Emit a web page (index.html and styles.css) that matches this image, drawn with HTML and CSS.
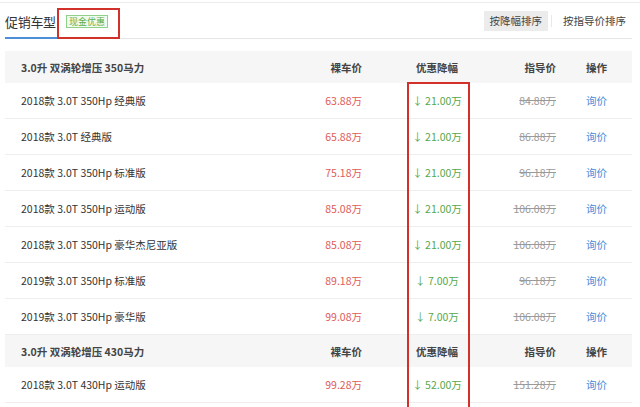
FILE: index.html
```html
<!DOCTYPE html>
<html lang="zh">
<head>
<meta charset="utf-8">
<link rel="stylesheet" href="styles.css">
</head>
<body>
<div class="page">
  <div class="topline"></div>
  <div class="tabs">
    <div class="tab-left">
      <div class="tab-title">促销车型</div>
      <span class="tag">现金优惠</span>
    </div>
    <div class="sorts">
      <span class="sort active">按降幅排序</span>
      <span class="sep"></span>
      <span class="sort">按指导价排序</span>
    </div>
    <div class="mark mark-tag"></div>
  </div>
  <div class="table">
    <div class="row head"><div class="c-name">3.0升 双涡轮增压 350马力</div><div class="c-price">裸车价</div><div class="c-disc">优惠降幅</div><div class="c-guide">指导价</div><div class="c-op">操作</div></div>
    <div class="row"><div class="c-name">2018款 3.0T 350Hp 经典版</div><div class="c-price red">63.88万</div><div class="c-disc green">↓ 21.00万</div><div class="c-guide strike">84.88万</div><div class="c-op blue">询价</div></div>
    <div class="row"><div class="c-name">2018款 3.0T 经典版</div><div class="c-price red">65.88万</div><div class="c-disc green">↓ 21.00万</div><div class="c-guide strike">86.88万</div><div class="c-op blue">询价</div></div>
    <div class="row"><div class="c-name">2018款 3.0T 350Hp 标准版</div><div class="c-price red">75.18万</div><div class="c-disc green">↓ 21.00万</div><div class="c-guide strike">96.18万</div><div class="c-op blue">询价</div></div>
    <div class="row"><div class="c-name">2018款 3.0T 350Hp 运动版</div><div class="c-price red">85.08万</div><div class="c-disc green">↓ 21.00万</div><div class="c-guide strike">106.08万</div><div class="c-op blue">询价</div></div>
    <div class="row"><div class="c-name">2018款 3.0T 350Hp 豪华杰尼亚版</div><div class="c-price red">85.08万</div><div class="c-disc green">↓ 21.00万</div><div class="c-guide strike">106.08万</div><div class="c-op blue">询价</div></div>
    <div class="row"><div class="c-name">2019款 3.0T 350Hp 标准版</div><div class="c-price red">89.18万</div><div class="c-disc green">↓ 7.00万</div><div class="c-guide strike">96.18万</div><div class="c-op blue">询价</div></div>
    <div class="row"><div class="c-name">2019款 3.0T 350Hp 豪华版</div><div class="c-price red">99.08万</div><div class="c-disc green">↓ 7.00万</div><div class="c-guide strike">106.08万</div><div class="c-op blue">询价</div></div>
    <div class="row head"><div class="c-name">3.0升 双涡轮增压 430马力</div><div class="c-price">裸车价</div><div class="c-disc">优惠降幅</div><div class="c-guide">指导价</div><div class="c-op">操作</div></div>
    <div class="row"><div class="c-name">2018款 3.0T 430Hp 运动版</div><div class="c-price red">99.28万</div><div class="c-disc green">↓ 52.00万</div><div class="c-guide strike">151.28万</div><div class="c-op blue">询价</div></div>
    <div class="mark mark-col"></div>
  </div>
</div>
</body>
</html>
```
FILE: styles.css
```css
html, body {
  margin: 0;
  padding: 0;
  background: #fff;
  overflow: hidden;
}
body {
  font-family: "Noto Sans CJK SC", "Noto Sans", sans-serif;
  color: #333;
  width: 640px;
  height: 407px;
}
.page {
  padding: 0 8px 0 5px;
}
.topline {
  height: 2px;
  border-bottom: 1px solid #ececec;
  margin-right: -8px;
  margin-left: -5px;
}
.tabs {
  position: relative;
  display: flex;
  justify-content: space-between;
  align-items: center;
  height: 35px;
  border-bottom: 1px solid #e6e6e6;
}
.tab-left {
  display: flex;
  align-items: center;
  height: 100%;
}
.tab-title {
  font-size: 13px;
  color: #333;
  height: 100%;
  display: flex;
  align-items: center;
  padding-top: 2px;
  box-sizing: border-box;
  border-bottom: 2px solid #4d8fd6;
  margin-bottom: -1px;
  width: 52px;
  letter-spacing: -0.3px;
}
.tag {
  margin-left: 9px;
  font-size: 9px;
  line-height: 11px;
  color: #5cae4a;
  border: 1px solid #8fd08a;
  background: #f3fbf1;
  padding: 0 2px;
  margin-top: 2px;
}
.sorts {
  display: flex;
  align-items: center;
  font-size: 10.5px;
  color: #444;
}
.sort {
  padding: 3px 6px;
  line-height: 14px;
}
.sort.active {
  background: #ececec;
}
.sep {
  width: 1px;
  height: 12px;
  background: #e8e8e8;
  margin: 0 5px 0 3px;
}
.mark {
  position: absolute;
  border: 2px solid #d2302a;
  box-sizing: border-box;
}
.mark-tag {
  left: 52px;
  top: 5px;
  width: 63px;
  height: 31px;
}
.table {
  position: relative;
  margin-top: 12px;
  width: 627px;
  font-size: 10.5px;
}
.row {
  display: grid;
  grid-template-columns: 295px 62px 130px 64px 1fr;
  align-items: center;
  height: 36px;
  border-bottom: 1px solid #eeeeee;
  box-sizing: border-box;
  white-space: nowrap;
}
.row.head {
  background: #f6f6f6;
  height: 32px;
  font-weight: bold;
  color: #444;
  border-bottom: none;
}
.c-name {
  padding-left: 16px;
}
.c-price, .c-guide {
  text-align: right;
}
.c-disc {
  text-align: center;
  padding-left: 20px;
}
.c-op {
  padding-left: 30px;
}
.red { color: #e05a55; }
.green { color: #55a84a; }
.blue { color: #4a8ad8; }
.strike {
  color: #9a9a9a;
  text-decoration: line-through;
}
.mark-col {
  left: 402px;
  top: 31px;
  width: 63px;
  height: 400px;
}
```
